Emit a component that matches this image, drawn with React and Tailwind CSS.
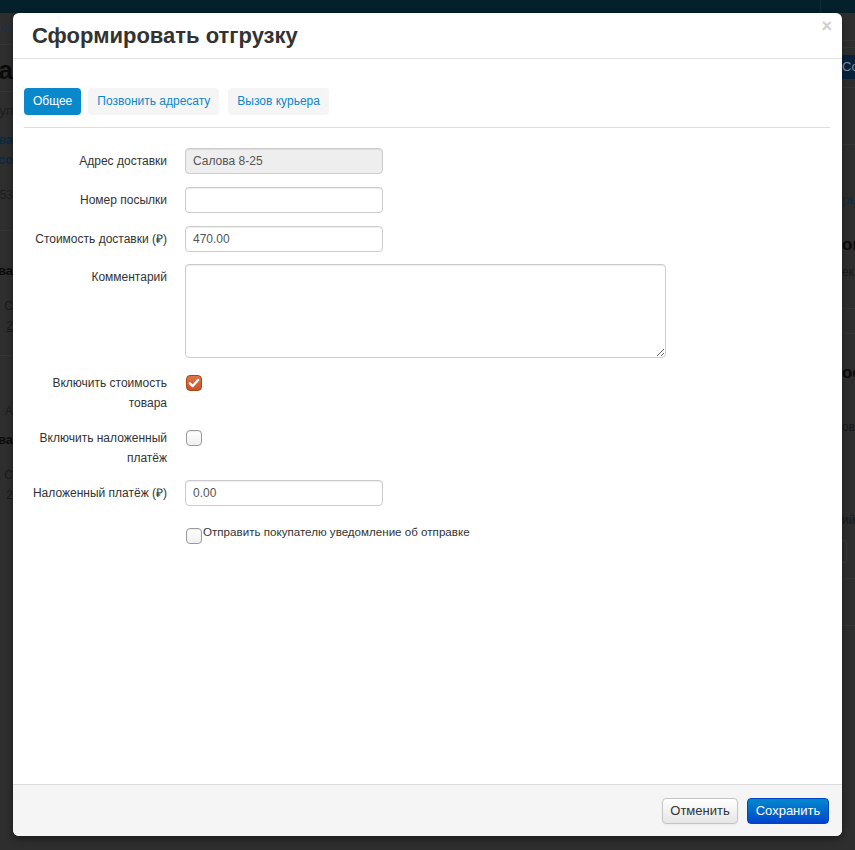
import React from "react";

function Line({ color = "bg-[#363636]" }) {
  return <div className={`h-px w-full ${color}`} />;
}

function Cut({ h, children, cls = "" }) {
  return (
    <div className={`flex justify-end overflow-hidden whitespace-nowrap ${cls}`} style={{ height: h, lineHeight: `${h}px` }}>
      {children}
    </div>
  );
}

function CutL({ h, children, cls = "" }) {
  return (
    <div className={`flex justify-start overflow-hidden whitespace-nowrap ${cls}`} style={{ height: h, lineHeight: `${h}px` }}>
      {children}
    </div>
  );
}

function Checkbox({ checked }) {
  if (checked) {
    return (
      <div className="w-[16px] h-[16px] rounded-[4px] border border-[#a9461c] bg-gradient-to-b from-[#e07545] to-[#c4542a] flex items-center justify-center shrink-0">
        <svg width="12" height="12" viewBox="0 0 12 12">
          <path d="M1.8 6.2 L4.7 9.1 L10.2 2.9" fill="none" stroke="white" strokeWidth="2.3" strokeLinecap="round" strokeLinejoin="round" />
        </svg>
      </div>
    );
  }
  return (
    <div className="w-[16px] h-[16px] rounded-[4px] border border-[#9a9a9a] bg-gradient-to-b from-white to-[#f0f0f0] shadow-[inset_0_1px_1px_rgba(0,0,0,0.08)] shrink-0" />
  );
}

export default function App() {
  const input =
    "w-[198px] h-[26px] border border-[#cccccc] rounded-[4px] px-[7px] text-[12px] text-[#555] leading-[24px] shadow-[inset_0_1px_1px_rgba(0,0,0,0.075)]";
  return (
    <div className="relative w-[855px] h-[850px] overflow-hidden bg-[#2e2e2e] font-['Liberation_Sans',Arial,sans-serif]">
      {/* page behind the backdrop */}
      <div className="h-[13px] bg-[#03202b] flex justify-end">
        <div className="w-px h-full bg-[#0c2c38] mr-[34px]" />
      </div>
      <div className="flex justify-between">
        {/* left strip */}
        <div className="w-[13px] flex flex-col text-[12px]">
          <Cut h={31} cls="text-[#1b3445]">ов</Cut>
          <Line />
          <div className="h-[46px] overflow-hidden flex justify-end pt-[4px]">
            <span className="text-[26px] font-bold leading-[42px] text-[#0b0b0b] whitespace-nowrap">ка</span>
          </div>
          <Line />
          <Cut h={38} cls="text-[#1d1d1d] text-[13px]">уп</Cut>
          <Cut h={20} cls="text-[#0b2942] font-bold text-[13px]">ова</Cut>
          <Cut h={20} cls="text-[#0b2942] font-bold text-[13px]">со</Cut>
          <div className="h-[15px]" />
          <Cut h={20} cls="text-[#1d1d1d]">453</Cut>
          <div className="h-[25px]" />
          <Line />
          <div className="h-[30px]" />
          <Cut h={20} cls="text-[#0b0b0b] font-bold text-[13px]">ова</Cut>
          <div className="h-[15px]" />
          <Cut h={20} cls="text-[#1a1a1a]">, С</Cut>
          <Cut h={20} cls="text-[#1a1a1a] underline">2</Cut>
          <div className="h-[19px]" />
          <Line />
          <div className="h-[45px]" />
          <Cut h={20} cls="text-[#1d1d1d]">А</Cut>
          <div className="h-[9px]" />
          <Cut h={20} cls="text-[#0b0b0b] font-bold text-[13px]">ова</Cut>
          <div className="h-[15px]" />
          <Cut h={20} cls="text-[#1a1a1a]">, С</Cut>
          <Cut h={20} cls="text-[#1a1a1a]">2</Cut>
        </div>
        {/* right strip */}
        <div className="w-[13px] flex flex-col text-[12px]">
          <div className="h-[27px]" />
          <Line />
          <div className="h-[6px]" />
          <Line />
          <div className="h-[7px]" />
          <CutL h={24} cls="bg-[#08213b] text-[#7f8fa0] text-[13px]">Сохранить</CutL>
          <div className="h-[8px]" />
          <Line />
          <div className="h-[56px]" />
          <Line />
          <div className="h-[45px]" />
          <CutL h={20} cls="text-[#0f2c44] text-[13px]">ры</CutL>
          <div className="h-[25px]" />
          <CutL h={20} cls="text-[#0b0b0b] font-bold text-[17px]">оплата</CutL>
          <div className="h-[7px]" />
          <CutL h={20} cls="text-[#1a1a1a]">ек</CutL>
          <div className="h-[26px]" />
          <Line />
          <div className="h-[24px]" />
          <Line />
          <div className="h-[28px]" />
          <CutL h={22} cls="text-[#0b0b0b] font-bold text-[17px]">ост</CutL>
          <div className="h-[33px]" />
          <CutL h={20} cls="text-[#1a1a1a]">ов</CutL>
          <div className="h-[28px]" />
          <div className="h-px w-[6px] bg-[#0e3550]" />
          <div className="h-[44px]" />
          <CutL h={20} cls="text-[#1a1a1a]">ий</CutL>
          <div className="h-[10px]" />
          <div className="h-[23px] w-[5px] border border-l-0 border-[#3a3a3a] rounded-r-[3px]" />
          <div className="h-[15px]" />
          <Line />
          <div className="h-[46px]" />
          <Line />
        </div>
      </div>

      {/* modal */}
      <div className="absolute left-[13px] top-[13px] w-[829px] h-[823px] bg-white rounded-[6px] flex flex-col shadow-[0_3px_7px_rgba(0,0,0,0.4)]">
        {/* header */}
        <div className="h-[46px] border-b border-[#e5e5e5] flex items-center justify-between pl-[19px] pr-[10px] shrink-0">
          <h3 className="text-[22px] font-bold text-[#333] leading-[28px]">Сформировать отгрузку</h3>
          <span className="text-[18px] font-bold text-[#cfcfcf] leading-none self-start mt-[4px]">×</span>
        </div>

        {/* body */}
        <div className="flex-1 pl-[11px] pr-[12px] pt-[29px]">
          <div className="flex h-[27px]">
            <div className="h-[27px] px-[9px] rounded-[4px] bg-[#0a88cc] text-white text-[12px] leading-[27px]">Общее</div>
            <div className="h-[27px] px-[9px] ml-[7px] rounded-[4px] bg-[#f5f5f5] text-[#0a88cc] text-[12px] leading-[27px]">Позвонить адресату</div>
            <div className="h-[27px] px-[9px] ml-[9px] rounded-[4px] bg-[#f5f5f5] text-[#0a88cc] text-[12px] leading-[27px]">Вызов курьера</div>
          </div>
          <div className="mt-[12px] border-t border-[#dddddd]" />

          <div className="pt-[20px] text-[12px] text-[#333]">
            <div className="flex gap-[18px] mb-[13px]">
              <label className="w-[143px] text-right leading-[26px]">Адрес доставки</label>
              <div className={`${input} bg-[#eeeeee]`}>Салова 8-25</div>
            </div>
            <div className="flex gap-[18px] mb-[13px]">
              <label className="w-[143px] text-right leading-[26px]">Номер посылки</label>
              <div className={`${input} bg-white`}></div>
            </div>
            <div className="flex gap-[18px] mb-[12px]">
              <label className="w-[143px] text-right leading-[26px]">Стоимость доставки (₽)</label>
              <div className={`${input} bg-white`}>470.00</div>
            </div>
            <div className="flex gap-[18px] mb-[13px]">
              <label className="w-[143px] text-right leading-[26px]">Комментарий</label>
              <textarea
                readOnly
                className="block w-[481px] h-[94px] border border-[#cccccc] rounded-[4px] bg-white shadow-[inset_0_1px_1px_rgba(0,0,0,0.075)] outline-none"
              />
            </div>
            <div className="flex gap-[18px] mb-[13px] h-[42px]">
              <label className="w-[143px] text-right leading-[20px] pt-[2px] pl-[8px]">Включить стоимость товара</label>
              <div className="pt-[4px] pl-[1px]">
                <Checkbox checked />
              </div>
            </div>
            <div className="flex gap-[18px] mb-[12px] h-[42px]">
              <label className="w-[143px] text-right leading-[20px] pt-[2px] pl-[8px]">Включить наложенный платёж</label>
              <div className="pt-[4px] pl-[1px]">
                <Checkbox />
              </div>
            </div>
            <div className="flex gap-[18px] mb-[13px]">
              <label className="w-[143px] text-right leading-[26px]">Наложенный платёж (₽)</label>
              <div className={`${input} bg-white`}>0.00</div>
            </div>
            <div className="flex pl-[162px]">
              <div className="pt-[9px]">
                <Checkbox />
              </div>
              <span className="leading-[26px] ml-[1px] text-[11.6px]">Отправить покупателю уведомление об отправке</span>
            </div>
          </div>
        </div>

        {/* footer */}
        <div className="h-[52px] shrink-0 border-t border-[#dddddd] bg-[#f5f5f5] rounded-b-[6px] flex items-center justify-end gap-[9px] pr-[13px] pt-[1px]">
          <button className="h-[26px] w-[76px] rounded-[4px] border border-[#c5c5c5] bg-gradient-to-b from-white to-[#e6e6e6] text-[13px] text-[#333] shadow-[inset_0_1px_0_rgba(255,255,255,0.2),0_1px_2px_rgba(0,0,0,0.05)]">
            Отменить
          </button>
          <button className="h-[26px] w-[82px] rounded-[4px] border border-[#0045c0] bg-gradient-to-b from-[#0088cc] to-[#0044cc] text-[13px] text-white">
            Сохранить
          </button>
        </div>
      </div>
    </div>
  );
}
